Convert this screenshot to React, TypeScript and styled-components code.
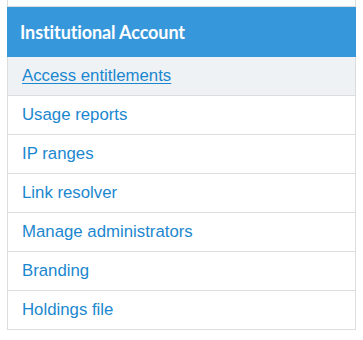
import React from 'react'
import styled, { createGlobalStyle } from 'styled-components'

const GlobalStyle = createGlobalStyle`
  body {
    margin: 0;
    background: #ffffff;
    font-family: "Liberation Sans", Arial, sans-serif;
  }
`;

const links = [
  'Access entitlements',
  'Usage reports',
  'IP ranges',
  'Link resolver',
  'Manage administrators',
  'Branding',
  'Holdings file',
];

export default function App() {
  return (
    <>
      <GlobalStyle />
      <Page>
        <PrevPanel />
        <Header>Institutional Account</Header>
        <List>
          {links.map((label, i) => (
            <Row key={label} active={i === 0}>
              <Link href="#" active={i === 0}>{label}</Link>
            </Row>
          ))}
        </List>
      </Page>
    </>
  )
}

const Page = styled.div`
  width: 349px;
  margin-left: 7px;
  display: flex;
  flex-direction: column;
`;

const PrevPanel = styled.div`
  height: 6px;
  border: 1px solid #dddddd;
  border-top: none;
`;

const Header = styled.div`
  height: 50px;
  display: flex;
  align-items: center;
  padding-left: 13px;
  background-color: #3797db;
  color: #ffffff;
  font-family: Lato, "Noto Sans", sans-serif;
  font-weight: 700;
  font-size: 18px;
  letter-spacing: -0.1px;
`;

const List = styled.ul`
  list-style: none;
  margin: 0;
  padding: 0;
  border-left: 1px solid #dddddd;
  border-right: 1px solid #dddddd;
`;

const Row = styled.li<{ active?: boolean }>`
  height: 38px;
  display: flex;
  align-items: center;
  padding-left: 14px;
  border-bottom: 1px solid #dddddd;
  background-color: ${p => (p.active ? '#eef2f5' : '#ffffff')};
`;

const Link = styled.a<{ active?: boolean }>`
  color: #1b87cf;
  font-size: 16.8px;
  text-decoration: ${p => (p.active ? 'underline' : 'none')};
  text-underline-offset: 2px;
`;
